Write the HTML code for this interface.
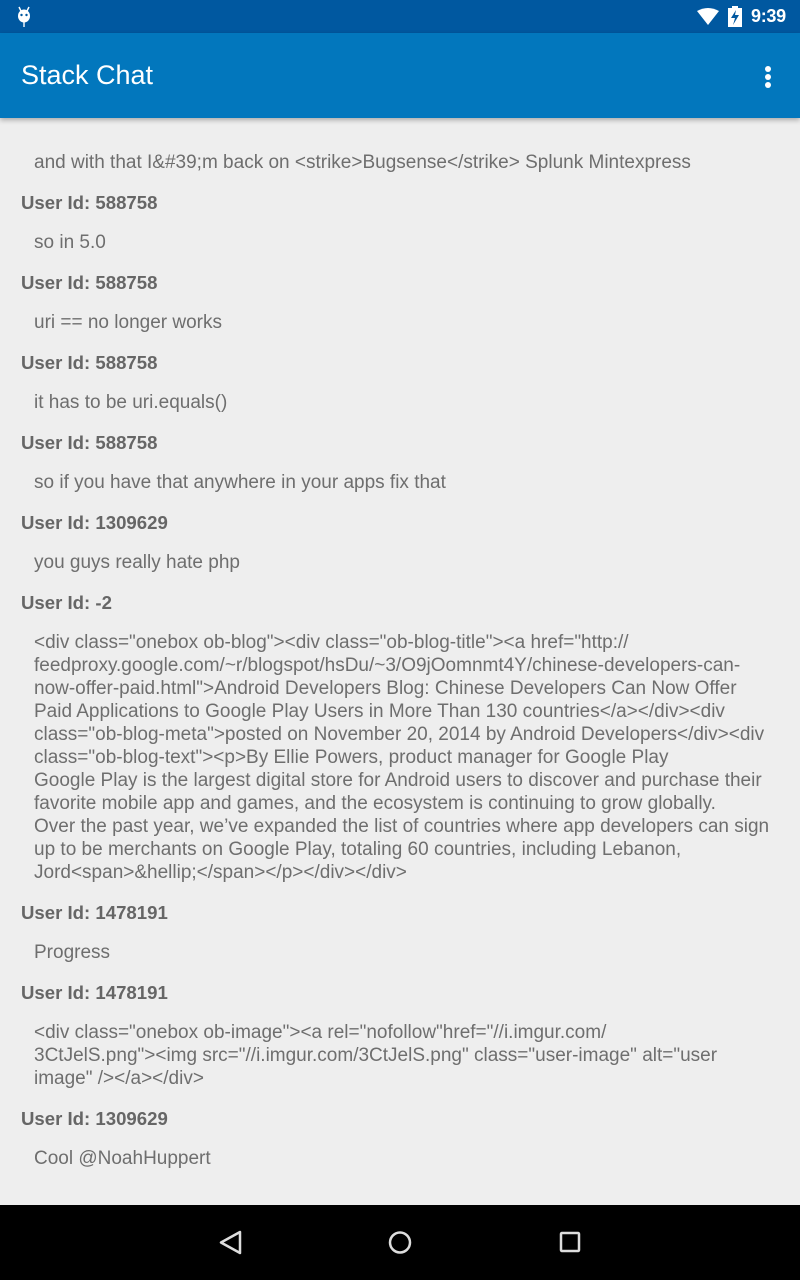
<!DOCTYPE html>
<html><head><meta charset="utf-8"><style>
*{margin:0;padding:0;box-sizing:border-box}
body{width:800px;height:1280px;background:#eeeeee;position:relative;overflow:hidden;font-family:"Liberation Sans",sans-serif}
.sb{position:absolute;left:0;top:0;width:800px;height:33px;background:#0058a0}
.tb{position:absolute;left:0;top:33px;width:800px;height:85px;background:#0277bd;box-shadow:0 2px 5px rgba(0,0,0,.3)}
.title{position:absolute;left:21px;top:27px;color:#fff;font-size:27px}
.dot{position:absolute;left:765px;width:6px;height:6px;border-radius:3px;background:#fff}
.l{position:absolute;font-size:19px;line-height:23px;white-space:pre;color:#6e6e6e}
.m{left:34px}
.u{left:21px;font-weight:bold;color:#666;font-size:18.6px}
.nav{position:absolute;left:0;top:1205px;width:800px;height:75px;background:#000}
</style></head><body>
<div class="sb">
<svg style="position:absolute;left:16px;top:5px" width="16" height="22" viewBox="0 0 16 22"><ellipse cx="8" cy="11" rx="6" ry="6.5" fill="#fff"/><line x1="3" y1="2" x2="5" y2="6" stroke="#fff" stroke-width="1.5"/><line x1="13" y1="2" x2="11" y2="6" stroke="#fff" stroke-width="1.5"/><circle cx="5.5" cy="10" r="1.2" fill="#0058a0"/><circle cx="10.5" cy="10" r="1.2" fill="#0058a0"/><rect x="7.3" y="17" width="1.4" height="5" fill="#fff"/></svg>
<svg style="position:absolute;left:697px;top:8px" width="22" height="17" viewBox="0 0 22 17"><path d="M0 3 Q11 -3 22 3 L11 17 Z" fill="#fff"/></svg>
<svg style="position:absolute;left:728px;top:6px" width="14" height="21" viewBox="0 0 14 21"><rect x="4" y="0" width="6" height="3" fill="#fff"/><rect x="0" y="2" width="14" height="19" fill="#fff"/><path d="M8 4 L3 12 L7 12 L5 19 L11 9 L7 9 Z" fill="#0058a0"/></svg>
<div style="position:absolute;left:751px;top:6px;color:#fff;font-size:18px;font-weight:bold;letter-spacing:-0.3px">9:39</div>
</div>
<div class="tb"><div class="title">Stack Chat</div>
<div class="dot" style="top:33px"></div><div class="dot" style="top:41px"></div><div class="dot" style="top:49px"></div></div>

<div class="l m" style="top:151px">and with that I&amp;#39;m back on &lt;strike&gt;Bugsense&lt;/strike&gt; Splunk Mintexpress</div>
<div class="l u" style="top:191px">User Id: 588758</div>
<div class="l m" style="top:231px">so in 5.0</div>
<div class="l u" style="top:271px">User Id: 588758</div>
<div class="l m" style="top:311px">uri == no longer works</div>
<div class="l u" style="top:351px">User Id: 588758</div>
<div class="l m" style="top:391px">it has to be uri.equals()</div>
<div class="l u" style="top:431px">User Id: 588758</div>
<div class="l m" style="top:471px">so if you have that anywhere in your apps fix that</div>
<div class="l u" style="top:511px">User Id: 1309629</div>
<div class="l m" style="top:551px">you guys really hate php</div>
<div class="l u" style="top:591px">User Id: -2</div>
<div class="l m" style="top:631px">&lt;div class="onebox ob-blog"&gt;&lt;div class="ob-blog-title"&gt;&lt;a href="http://
feedproxy.google.com/~r/blogspot/hsDu/~3/O9jOomnmt4Y/chinese-developers-can-
now-offer-paid.html"&gt;Android Developers Blog: Chinese Developers Can Now Offer
Paid Applications to Google Play Users in More Than 130 countries&lt;/a&gt;&lt;/div&gt;&lt;div
class="ob-blog-meta"&gt;posted on November 20, 2014 by Android Developers&lt;/div&gt;&lt;div
class="ob-blog-text"&gt;&lt;p&gt;By Ellie Powers, product manager for Google Play
Google Play is the largest digital store for Android users to discover and purchase their
favorite mobile app and games, and the ecosystem is continuing to grow globally.
Over the past year, we’ve expanded the list of countries where app developers can sign
up to be merchants on Google Play, totaling 60 countries, including Lebanon,
Jord&lt;span&gt;&amp;hellip;&lt;/span&gt;&lt;/p&gt;&lt;/div&gt;&lt;/div&gt;</div>
<div class="l u" style="top:901px">User Id: 1478191</div>
<div class="l m" style="top:941px">Progress</div>
<div class="l u" style="top:981px">User Id: 1478191</div>
<div class="l m" style="top:1021px">&lt;div class="onebox ob-image"&gt;&lt;a rel="nofollow"href="//i.imgur.com/
3CtJelS.png"&gt;&lt;img src="//i.imgur.com/3CtJelS.png" class="user-image" alt="user
image" /&gt;&lt;/a&gt;&lt;/div&gt;</div>
<div class="l u" style="top:1107px">User Id: 1309629</div>
<div class="l m" style="top:1147px">Cool @NoahHuppert</div>

<div class="nav">
<svg style="position:absolute;left:0;top:0" width="800" height="75" viewBox="0 0 800 75">
<path d="M240 27 L240 48 L221 37.5 Z" fill="none" stroke="#ddd" stroke-width="2.5" stroke-linejoin="round"/>
<circle cx="400" cy="37.5" r="10" fill="none" stroke="#ddd" stroke-width="2.5"/>
<rect x="561" y="28" width="18" height="18" rx="1" fill="none" stroke="#ddd" stroke-width="2.5"/>
</svg>
</div>
</body></html>
